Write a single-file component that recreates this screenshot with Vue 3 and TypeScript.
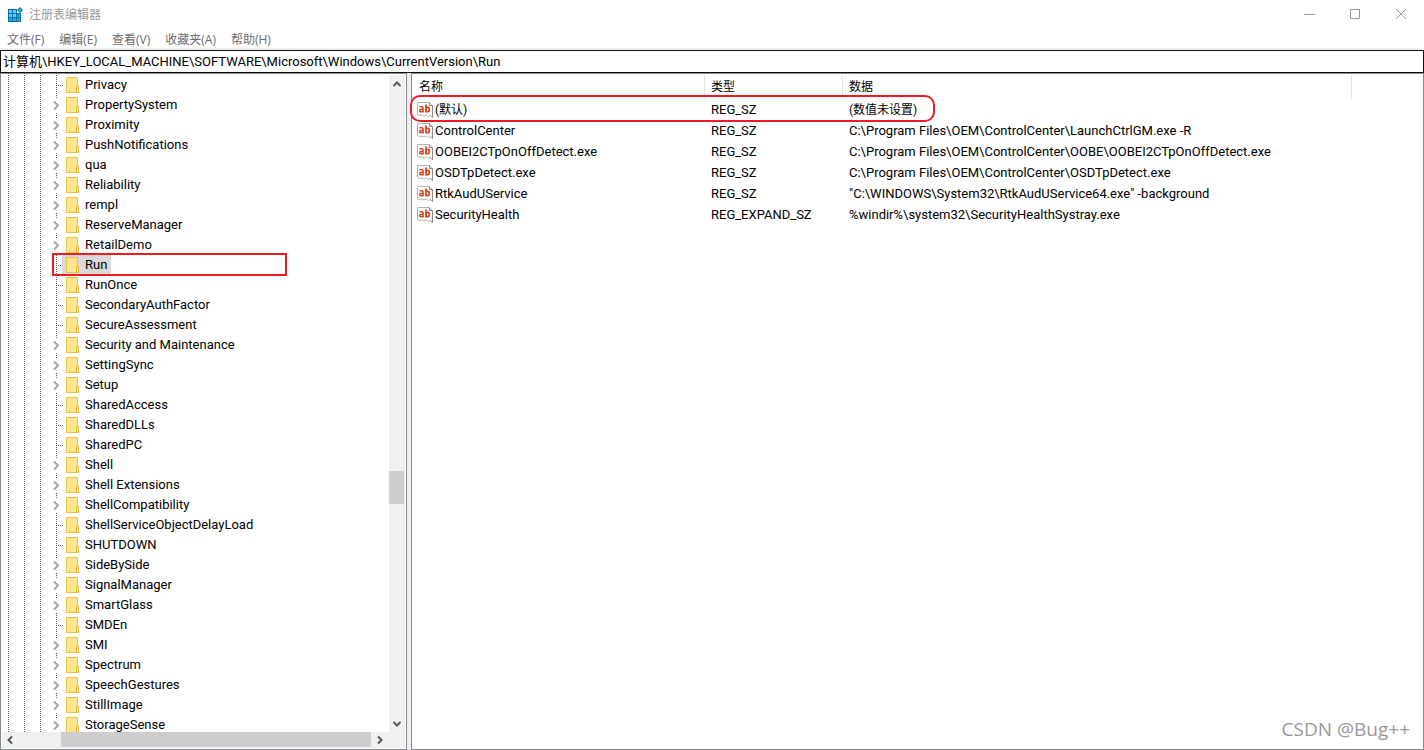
<script setup lang="ts">
import { ref } from 'vue'

interface TreeKey {
  name: string
  expandable: boolean
}

interface RegValue {
  name: string
  type: string
  data: string
}

const menus: string[] = ['文件(F)', '编辑(E)', '查看(V)', '收藏夹(A)', '帮助(H)']

const address = ref('计算机\\HKEY_LOCAL_MACHINE\\SOFTWARE\\Microsoft\\Windows\\CurrentVersion\\Run')
const selected = ref('Run')

const leaves = new Set<string>([
  'Privacy', 'Run', 'RunOnce', 'SecondaryAuthFactor', 'SecureAssessment', 'SharedAccess',
  'SharedDLLs', 'SharedPC', 'ShellServiceObjectDelayLoad', 'SHUTDOWN', 'SMDEn',
])

const keys: TreeKey[] = [
  'Privacy', 'PropertySystem', 'Proximity', 'PushNotifications', 'qua', 'Reliability', 'rempl',
  'ReserveManager', 'RetailDemo', 'Run', 'RunOnce', 'SecondaryAuthFactor', 'SecureAssessment',
  'Security and Maintenance', 'SettingSync', 'Setup', 'SharedAccess', 'SharedDLLs', 'SharedPC',
  'Shell', 'Shell Extensions', 'ShellCompatibility', 'ShellServiceObjectDelayLoad', 'SHUTDOWN',
  'SideBySide', 'SignalManager', 'SmartGlass', 'SMDEn', 'SMI', 'Spectrum', 'SpeechGestures',
  'StillImage', 'StorageSense',
].map((name) => ({ name, expandable: !leaves.has(name) }))

const values: RegValue[] = [
  { name: '(默认)', type: 'REG_SZ', data: '(数值未设置)' },
  { name: 'ControlCenter', type: 'REG_SZ', data: 'C:\\Program Files\\OEM\\ControlCenter\\LaunchCtrlGM.exe -R' },
  { name: 'OOBEI2CTpOnOffDetect.exe', type: 'REG_SZ', data: 'C:\\Program Files\\OEM\\ControlCenter\\OOBE\\OOBEI2CTpOnOffDetect.exe' },
  { name: 'OSDTpDetect.exe', type: 'REG_SZ', data: 'C:\\Program Files\\OEM\\ControlCenter\\OSDTpDetect.exe' },
  { name: 'RtkAudUService', type: 'REG_SZ', data: '"C:\\WINDOWS\\System32\\RtkAudUService64.exe" -background' },
  { name: 'SecurityHealth', type: 'REG_EXPAND_SZ', data: '%windir%\\system32\\SecurityHealthSystray.exe' },
]
</script>

<template>
  <div class="window">
    <header class="titlebar">
      <svg class="app-icon" width="16" height="16" viewBox="0 0 16 16" aria-hidden="true">
        <path d="M1 2h9v4h4v9H1z" fill="#0a6fa3" />
        <path d="M2 3h3v3H2zM6 3h3v3H6zM2 7h3v3H2zM6 7h3v3H6z" fill="#4fd0fa" />
        <path d="M10 7h3v3h-3zM2 11h3v3H2zM6 11h3v3H6zM10 11h3v3h-3z" fill="#1ba6e0" />
        <path d="M10 0h6v6h-6z" fill="#fff" />
        <path d="M13 0l3 3-3 3-3-3z" fill="#1278a8" />
        <path d="M13 1.500l1.500 1.500-1.500 1.500-1.500-1.500z" fill="#45b4e0" />
      </svg>
      <h1 class="title">注册表编辑器</h1>
      <div class="controls">
        <button type="button" aria-label="最小化">
          <svg width="12" height="12" viewBox="0 0 12 12"><path d="M1 5.500h11" /></svg>
        </button>
        <button type="button" aria-label="最大化">
          <svg width="12" height="12" viewBox="0 0 12 12"><path d="M1.500 0.500h9v9h-9z" /></svg>
        </button>
        <button type="button" aria-label="关闭">
          <svg width="12" height="12" viewBox="0 0 12 12"><path d="M1 0l10 10M11 0L1 10" /></svg>
        </button>
      </div>
    </header>

    <nav class="menubar">
      <button v-for="m in menus" :key="m" type="button">{{ m }}</button>
    </nav>

    <input v-model="address" class="address" type="text" aria-label="地址" spellcheck="false" />

    <main class="panes">
      <section class="tree-pane">
        <div class="tree-row">
          <ul class="tree" role="tree">
            <li
              v-for="k in keys"
              :key="k.name"
              role="treeitem"
              :aria-selected="k.name === selected"
              @click="selected = k.name"
            >
              <svg class="guides" width="60" height="20" viewBox="0 0 60 20" aria-hidden="true">
                <g fill="none" stroke="#606060" stroke-dasharray="1 1" shape-rendering="crispEdges">
                  <path d="M6.500 0v20M22.500 0v20M38.500 0v20" />
                  <path v-if="k.expandable" d="M54.500 0v3M54.500 18v2" />
                  <path v-else d="M54.500 0v20M56 10.500h6" />
                </g>
                <path v-if="k.expandable" d="M52 6.500l4 4-4 4" fill="none" stroke="#a6a6a6" stroke-width="2" />
              </svg>
              <span class="label">
                <svg width="14" height="16" viewBox="0 0 14 16" aria-hidden="true">
                  <path d="M0.500 0.500h11v9h1v6H0.500z" fill="#ffe48c" stroke="#eac44a" />
                  <path d="M10.500 9.500h2v6h-2z" fill="#ffeeb0" stroke="#e8b93a" />
                </svg>
                <span class="name">{{ k.name }}</span>
              </span>
              <span v-if="k.name === 'Run'" class="mark mark-key"></span>
            </li>
          </ul>
          <div class="vscroll">
            <button type="button" aria-label="向上滚动">
              <svg width="10" height="10" viewBox="0 0 10 10"><path d="M1.500 7L5 3.500 8.500 7" /></svg>
            </button>
            <div class="vtrack"><div class="vthumb"></div></div>
            <button type="button" aria-label="向下滚动">
              <svg width="10" height="10" viewBox="0 0 10 10"><path d="M1.500 3L5 6.500 8.500 3" /></svg>
            </button>
          </div>
        </div>
        <div class="hscroll">
          <button type="button" aria-label="向左滚动">
            <svg width="10" height="10" viewBox="0 0 10 10"><path d="M7 1.500L3.500 5 7 8.500" /></svg>
          </button>
          <div class="htrack"><div class="hthumb"></div></div>
          <button type="button" aria-label="向右滚动">
            <svg width="10" height="10" viewBox="0 0 10 10"><path d="M3 1.500L6.500 5 3 8.500" /></svg>
          </button>
        </div>
      </section>

      <section class="value-pane">
        <table>
          <colgroup>
            <col class="c-name" /><col class="c-type" /><col class="c-data" /><col />
          </colgroup>
          <thead>
            <tr><th>名称</th><th>类型</th><th>数据</th><td></td></tr>
          </thead>
          <tbody>
            <tr v-for="v in values" :key="v.name">
              <td>
                <span class="value-name">
                  <svg width="16" height="16" viewBox="0 0 16 16" aria-hidden="true">
                    <path d="M0.500 0.500h12l3 3v12l-2-2-2 1-2-1.500-2.500 1-2-1-3 .5-1.500-1z" fill="#fff" stroke="#b4b4b4" />
                    <path d="M12.500 0.500v3h3" fill="none" stroke="#8a8a8a" />
                    <path d="M15.500 3.500v12l-2-2" fill="none" stroke="#8a8a8a" />
                    <g fill="none" stroke="#d4481e">
                      <path d="M2.500 4.800H5q1 0 1 1v4.700M6 7.500H3.700q-1 0-1 1.100t1 1.100H6" stroke-width="1.600" />
                      <path d="M9 2.500v8M9 5.300h2q1.200 0 1.200 1.200v2q0 1.200-1.200 1.200H9" stroke-width="1.800" />
                    </g>
                  </svg>
                  <span :class="{ cjk: v.name === '(默认)' }">{{ v.name }}</span>
                </span>
              </td>
              <td>{{ v.type }}</td>
              <td :class="{ cjk: v.name === '(默认)' }">{{ v.data }}</td>
              <td></td>
            </tr>
          </tbody>
        </table>
        <span class="mark mark-value"></span>
        <span class="watermark">CSDN @Bug++</span>
      </section>
    </main>
  </div>
</template>

<style>
html,
body {
  margin: 0;
  background: #fff;
}
</style>

<style scoped>
.window {
  display: flex;
  flex-direction: column;
  height: 100vh;
  overflow: hidden;
  background: #fff;
  color: #000;
  font-family: Roboto, "Noto Sans CJK SC", sans-serif;
  font-size: 13px;
  line-height: 20px;
}

button {
  padding: 0;
  border: 0;
  background: none;
  font: inherit;
  color: inherit;
}

svg {
  display: block;
  flex: none;
}

.titlebar {
  display: flex;
  align-items: center;
  height: 30px;
  flex: none;
  padding-left: 7px;
  color: #999;
}

.title {
  flex: 1;
  margin: 0 0 0 6px;
  font-size: 12px;
  font-weight: 400;
}

.controls {
  display: flex;
}

.controls button {
  display: grid;
  place-items: center;
  width: 46px;
  height: 28px;
}

.controls path {
  fill: none;
  stroke: #999;
}

.menubar {
  display: flex;
  gap: 15px;
  height: 20px;
  flex: none;
  box-sizing: border-box;
  padding-left: 7px;
  border-bottom: 2px solid #f0f0f0;
  color: #6d6d6d;
  font-family: "Open Sans", "Noto Sans CJK SC", sans-serif;
  font-size: 12px;
}

.address {
  flex: none;
  width: 100%;
  height: 23px;
  box-sizing: border-box;
  padding: 0 2px 2px;
  border: 1px solid #101010;
  border-radius: 0;
  outline: none;
  background: #fff;
  color: #000;
  font: inherit;
}

.panes {
  display: flex;
  gap: 4px;
  flex: 1;
  min-height: 0;
  background: #f0f0f0;
}

.tree-pane,
.value-pane {
  box-sizing: border-box;
  border: 1px solid #828790;
  background: #fff;
}

.tree-pane {
  display: flex;
  flex-direction: column;
  width: 407px;
  flex: none;
  padding: 1px;
}

.tree-row {
  display: flex;
  flex: 1;
  min-height: 0;
}

.tree {
  flex: 1;
  margin: 0;
  padding: 0;
  overflow: hidden;
  list-style: none;
}

.tree li {
  position: relative;
  display: flex;
  height: 20px;
}

.guides {
  overflow: visible;
}

.label {
  display: flex;
  align-items: center;
  padding: 0 4px;
}

.name {
  padding-left: 5px;
  white-space: nowrap;
}

li[aria-selected="true"] .label {
  background: #d9d9d9;
}

.mark {
  position: absolute;
  box-sizing: border-box;
  border: 2px solid #ed1c24;
  pointer-events: none;
}

.mark-key {
  top: -2px;
  left: 50px;
  width: 235px;
  height: 23px;
}

.mark-value {
  top: 21px;
  left: -2px;
  width: 525px;
  height: 27px;
  border-radius: 10px;
}

.vscroll {
  display: flex;
  flex-direction: column;
  width: 16px;
  flex: none;
  background: #f0f0f0;
}

.vscroll button,
.hscroll button {
  display: grid;
  place-items: center;
  flex: none;
  width: 16px;
  height: 17px;
}

.vscroll path,
.hscroll path {
  fill: none;
  stroke: #555;
  stroke-width: 2;
}

.vtrack {
  flex: 1;
  padding-top: 379px;
}

.vthumb {
  width: 15px;
  height: 33px;
  background: #cdcdcd;
}

.hscroll {
  display: flex;
  height: 16px;
  flex: none;
  padding-right: 17px;
  background: #f0f0f0;
}

.hscroll button {
  height: 16px;
}

.htrack {
  flex: 1;
  padding-left: 43px;
}

.hthumb {
  width: 310px;
  height: 15px;
  background: #cdcdcd;
}

.value-pane {
  position: relative;
  flex: 1;
  min-width: 0;
  padding-top: 1px;
}

table {
  width: 100%;
  border-collapse: collapse;
  table-layout: fixed;
}

.c-name {
  width: 293px;
}

.c-type {
  width: 138px;
}

.c-data {
  width: 509px;
}

th {
  height: 24px;
  padding: 0 6px;
  box-sizing: border-box;
  box-shadow: inset -1px 0 #e5e5e5;
  font-size: 12px;
  font-weight: 400;
  text-align: left;
}

th:first-child {
  padding-left: 7px;
}

tbody td {
  height: 21px;
  padding: 0 6px;
  line-height: 20px;
  white-space: nowrap;
}

tbody td:first-child {
  padding-left: 5px;
}

.value-name {
  display: flex;
  align-items: center;
  gap: 2px;
}

.cjk {
  font-size: 12px;
}

.watermark {
  position: absolute;
  right: 13px;
  bottom: 6px;
  color: #999;
  font-family: "Open Sans", sans-serif;
  font-size: 19px;
  line-height: 28px;
}
</style>
